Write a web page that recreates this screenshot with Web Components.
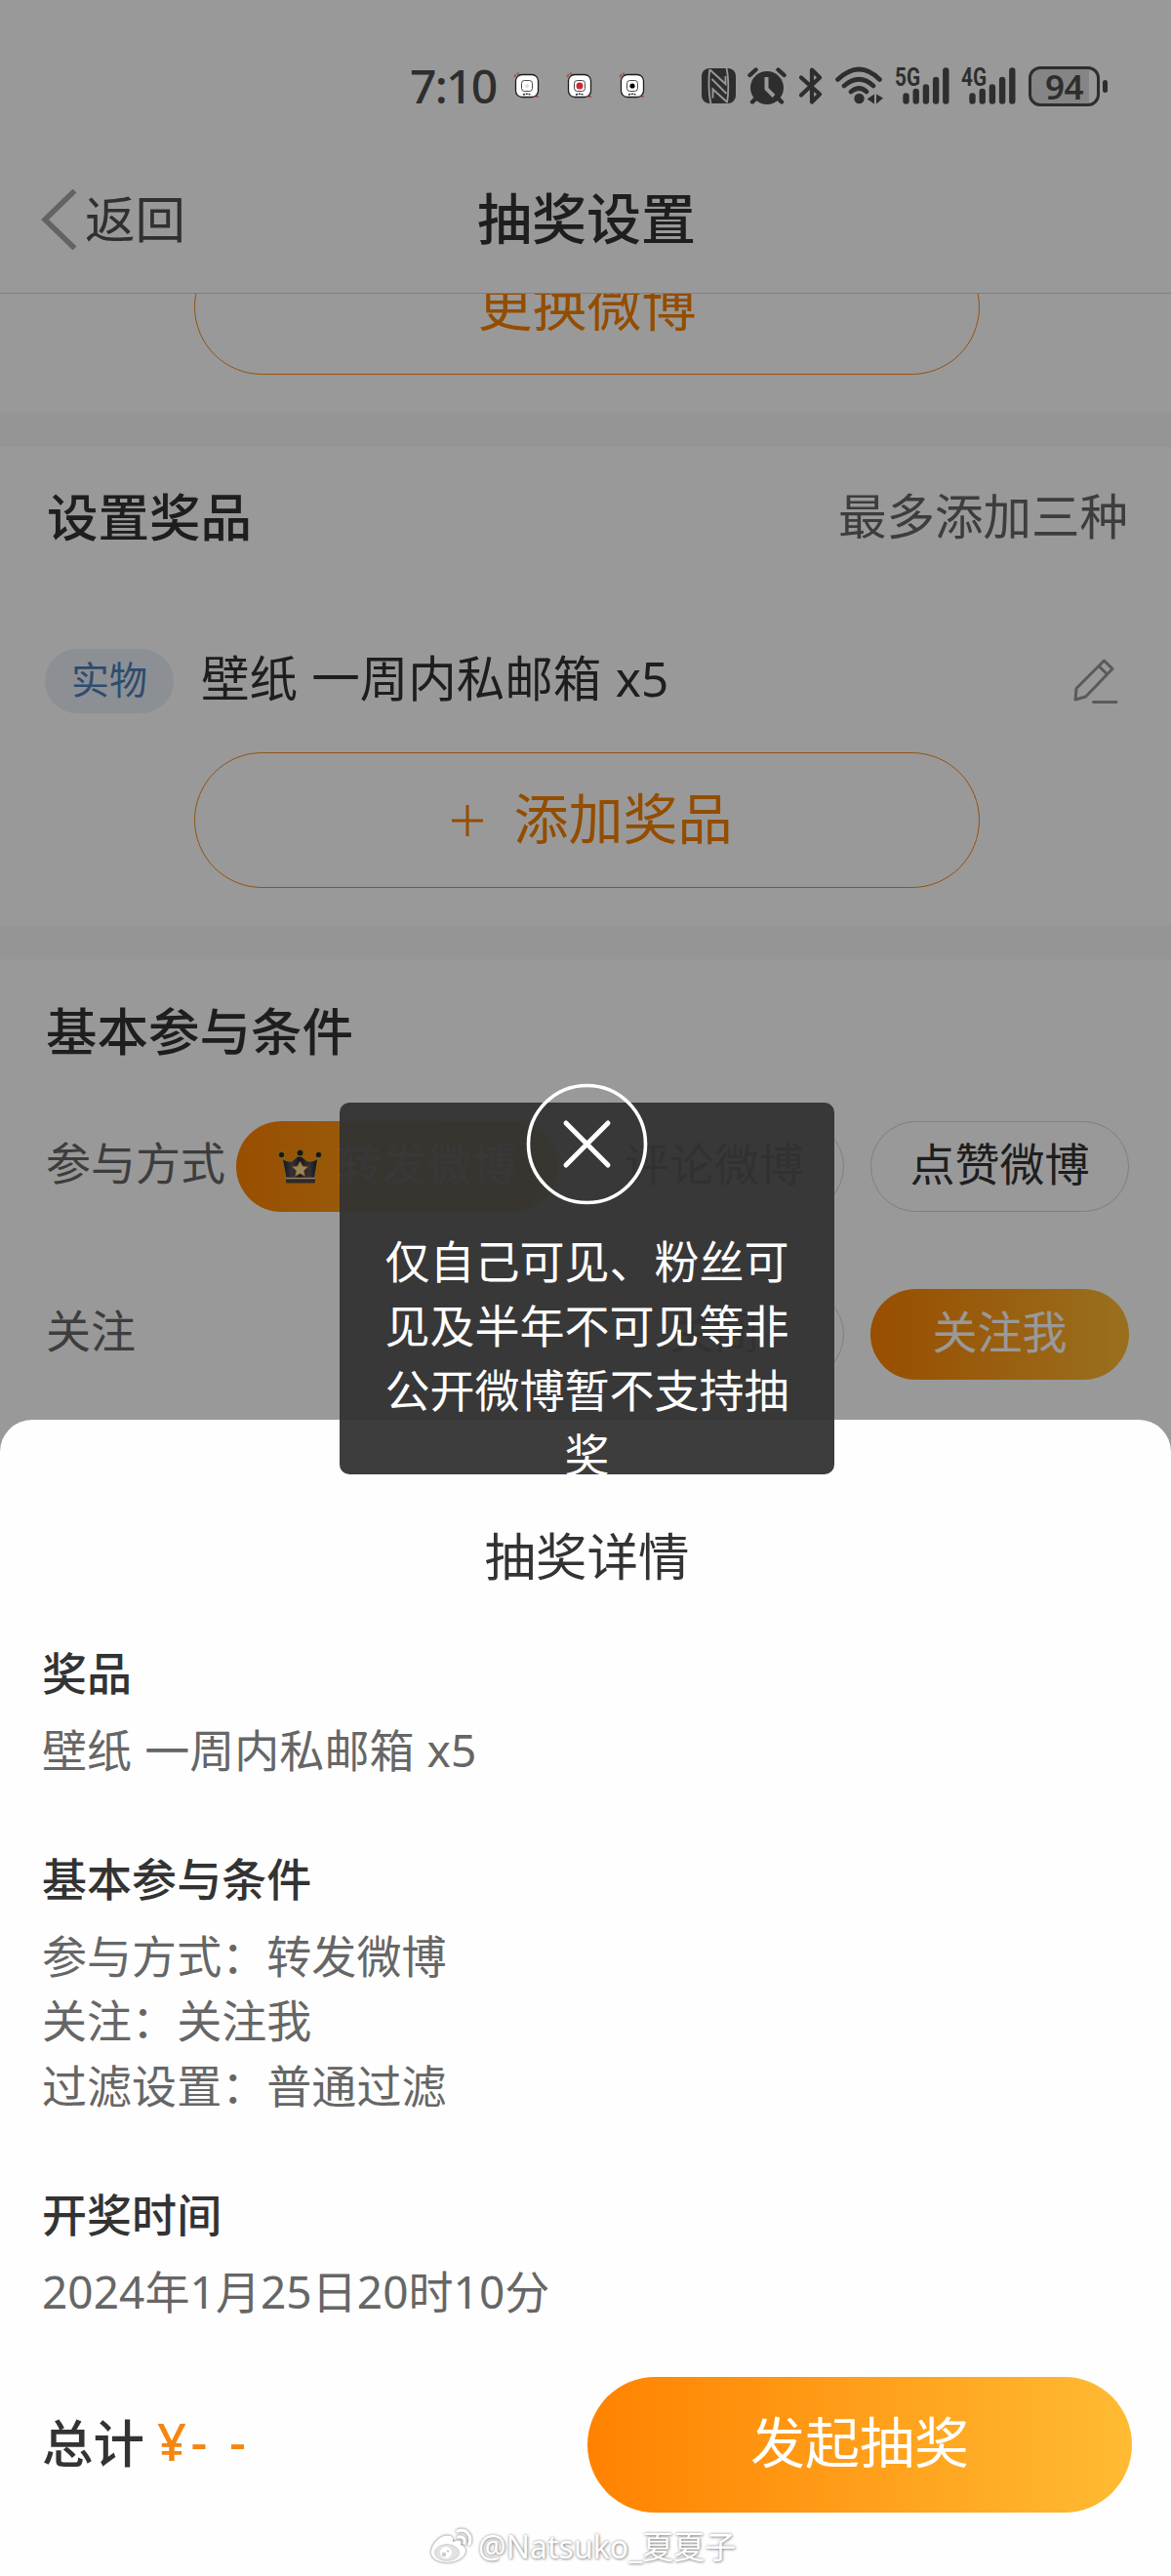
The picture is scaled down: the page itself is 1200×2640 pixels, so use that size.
<!DOCTYPE html>
<html lang="zh-CN">
<head>
<meta charset="utf-8">
<title>抽奖设置</title>
<style>
html,body{margin:0;padding:0}
body{width:1200px;height:2640px;overflow:hidden;background:#fff;color:#333;font-family:"Noto Sans","Noto Sans CJK SC",sans-serif}
</style>
</head>
<body>
<lottery-page></lottery-page>
<script>
const define = (name, css, html) => customElements.define(name, class extends HTMLElement {
  constructor() {
    super();
    const t = document.createElement('template');
    t.innerHTML = `<style>*{box-sizing:border-box}${css}</style>${typeof html === 'function' ? html(this) : html}`;
    this.attachShadow({ mode: 'open' }).appendChild(t.content.cloneNode(true));
  }
});

/* Status bar */
define('app-badge', ':host{display:block;width:26px;height:26px}svg{display:block;overflow:visible}', el => `
<svg width="26" height="26" viewBox="0 0 26 26">
<path d="M0 4l2-3M3 1l2-1M22 24l3 0" stroke="#a8584f" stroke-width="2"/>
<rect x="1.5" y="1.5" width="23" height="23" rx="6.5" fill="#fff" stroke="#1c1c1c" stroke-width="1.3"/>
<rect x="7.5" y="7.5" width="11" height="11" rx="3" fill="#fff" stroke="#333" stroke-width=".9"/>
<circle cx="13" cy="13" r="${el.dataset.r || 3}" fill="${el.dataset.fill || '#ddd'}"/>
<path d="M9 22q4-1.500 8 0" stroke="#222" fill="none" stroke-width="1.4" stroke-dasharray="2 .8"/></svg>`);

define('signal-bars', ':host{display:block;width:58px;height:40px}svg{display:block;overflow:visible}text{font:700 26px "Roboto","Noto Sans",sans-serif;fill:#2e2e2e}', el => `
<svg width="58" height="40" viewBox="0 0 58 40">
<text x="0" y="20" font-size="26" textLength="26" lengthAdjust="spacingAndGlyphs">${el.dataset.label}</text>
<path d="M11.500 30.500v5M21.700 26v9.500M31.900 21.500v14M42.100 14v21.500M52.300 4.500v31" stroke="#2e2e2e" stroke-width="6.400" stroke-linecap="round"/></svg>`);

define('battery-level', `:host{display:flex;align-items:center;gap:3px;height:42px}
.b{width:73px;height:41px;border:3px solid #2e2e2e;border-radius:12px;background:linear-gradient(90deg,#858585 88%,#999 88%);display:flex;align-items:center;justify-content:center;font-size:35px;line-height:35px;font-weight:600;color:#2e2e2e;letter-spacing:-.5px}
i{width:5px;height:13px;border-radius:3px;background:#2e2e2e}`, '<div class="b"><slot></slot></div><i></i>');

define('status-bar', `:host{display:block;height:149px;position:relative;z-index:3;color:#2e2e2e}
.r{display:flex;align-items:center;height:176px;padding-left:420px}
.t{font-size:48px;line-height:48px;font-weight:500;width:107px;letter-spacing:-1.700px;white-space:nowrap}
.apps{display:flex;gap:28px;width:192px}svg{display:block}
.nfc{margin-right:12px}.al{margin-right:13px}.bt{margin-right:13px}.wf{margin-right:12px}.s1{margin-right:10px}.s2{margin-right:11px}`, `
<div class="r"><div class="t">7:10</div>
<div class="apps"><app-badge data-r="2"></app-badge><app-badge data-fill="#cf2633" data-r="3.500"></app-badge><app-badge data-fill="#000" data-r="2.600"></app-badge></div>
<svg class="nfc" width="35" height="36" viewBox="0 0 35 36"><rect width="35" height="36" rx="8" fill="#2e2e2e"/><path d="M8.300 1C7 10 7 26 9.500 36M25.500 0c2.300 10 2.300 26 .5 35" stroke="#999" stroke-width="1.800" fill="none"/><path d="M8.500 1.500L24.500 16V8M26.500 35L11.500 21.500v9M10.500 11L25.500 26" stroke="#999" stroke-width="1.900" fill="none"/></svg>
<svg class="al" width="40" height="38" viewBox="0 0 40 38"><circle cx="20" cy="21" r="17" fill="#2e2e2e"/><path d="M2.500 8l6-5.500M37.500 8l-6-5.500M5 35.500l5-5M35 35.500l-5-5" stroke="#2e2e2e" stroke-width="4.400" stroke-linecap="round"/><path d="M19.500 10v12l7.500 7.500" stroke="#999" stroke-width="4" fill="none"/></svg>
<svg class="bt" width="24" height="38" viewBox="0 0 24 38"><path d="M2 10.500L21 27.500 13 35.500V2.500L21 10.500 2 28.500" stroke="#2e2e2e" stroke-width="4.200" fill="none" stroke-linejoin="round" stroke-linecap="round"/></svg>
<svg class="wf" width="49" height="40" viewBox="0 0 49 40"><path d="M2.500 13.500Q24.500-7.500 45.500 13.500M9 20q15.500-13.500 30 0M16 26q8.500-7 16 0" stroke="#2e2e2e" stroke-width="4.600" stroke-linecap="round" fill="none"/><circle cx="24.500" cy="33" r="5.200" fill="#2e2e2e"/><path d="M40 28.500v10l-7.500-5zM42 28.500v10l7-6z" fill="#2e2e2e"/></svg>
<signal-bars class="s1" data-label="5G"></signal-bars><signal-bars class="s2" data-label="4G"></signal-bars>
<battery-level>94</battery-level></div>`);

/* Navigation */
define('nav-header', `:host{display:grid;grid-template-columns:1fr auto 1fr;align-items:center;height:152px;padding:0 40px 0 42px;border-bottom:1px solid #d2d2d2;background:#fff}
.back{display:flex;align-items:center;gap:8px;font-size:51.500px;line-height:72px;color:#505050}svg{display:block}
.back span{padding-bottom:2px}
h1{margin:0;font-size:56px;line-height:80px;font-weight:500;color:#333;padding-bottom:3px}`, `
<div class="back"><svg width="37" height="62" viewBox="0 0 37 62"><path d="M34.500 1.500L4 31l30.500 29.500" fill="none" stroke="#a6a6a6" stroke-width="5.500"/></svg><span><slot name="back"></slot></span></div><h1><slot></slot></h1><span></span>`);

define('outline-button', `:host{display:flex;align-items:center;justify-content:center;width:805px;height:139px;margin:0 auto;border:1.500px solid #f58a1c;border-radius:70px;color:#f58100;font-size:56px;line-height:80px}
.l{padding-bottom:6px}:host([plus]){padding-left:10px}
svg{display:block;margin-right:32px}`, el => `${el.hasAttribute('plus') ? '<svg width="32" height="32" viewBox="0 0 32 32"><path d="M0 16h32M16 0v32" stroke="#f58100" stroke-width="3"/></svg>' : ''}<span class="l"><slot></slot></span>`);

define('section-title', `:host{display:flex;align-items:center;justify-content:space-between;font-size:52.500px;font-weight:500;color:#333;padding-bottom:6px}
.n{font-size:49.500px;font-weight:400;color:#666}`, '<span><slot></slot></span><span class="n"><slot name="note"></slot></span>');

define('prize-item', `:host{display:flex;align-items:center;height:66px;font-size:49.500px;line-height:66px;color:#333}
.tag{width:132px;height:66px;border-radius:33px;background:#e9f1f7;color:#507fb8;font-size:39px;text-align:center;line-height:62px;margin-right:28px}
.x{flex:1;padding-bottom:6px;word-spacing:1.500px}svg{display:block}`, `
<span class="tag"><slot name="tag"></slot></span><span class="x"><slot></slot></span>
<svg width="46" height="46" viewBox="0 0 46 46"><path d="M2 42l1-11.500L31.500 2l8.500 8.500L12.500 39zM26 7.500l8.500 8.500" fill="none" stroke="#979797" stroke-width="3" stroke-linejoin="round"/><path d="M20.500 44.500H44" stroke="#979797" stroke-width="3" stroke-linecap="round"/></svg>`);

define('crown-icon', ':host{display:block;width:48px;height:38px}svg{display:block}', `
<svg width="48" height="38" viewBox="0 0 48 38"><defs><linearGradient id="k"><stop stop-color="#24222a"/><stop offset=".28" stop-color="#5b5560"/><stop offset=".5" stop-color="#29252c"/><stop offset=".75" stop-color="#58525c"/><stop offset="1" stop-color="#1d1b20"/></linearGradient></defs>
<path d="M5 10q8 5 11 2l7-6 7 6q4 3 12-2l-4 24H9.500z" fill="url(#k)" stroke="#d8a51e" stroke-width="1.400"/>
<rect x="9" y="30" width="30" height="5.500" rx="1.500" fill="#4c4648"/><path d="M9 30.500h30" stroke="#f7d79c" stroke-width="1.500"/>
<g fill="#2b272c" stroke="#d8a51e" stroke-width="1.200"><circle cx="4.500" cy="6.500" r="3.300"/><circle cx="23.500" cy="4.500" r="3.600"/><circle cx="42.500" cy="6.500" r="3.300"/></g>
<path d="M23.500 13l2.500 5 5.500.8-4 4 1 5.700-5-2.800-5 2.800 1-5.700-4-4 5.500-.8z" fill="#ffe08f" stroke="#c98a2b" stroke-width=".8"/></svg>`);

define('option-chip', `:host{display:flex;align-items:center;justify-content:center;width:265px;height:93px;border:1px solid #d4d4d4;border-radius:47px;font-size:46px;line-height:60px;padding-bottom:8px;color:#333;white-space:nowrap}
:host([selected]){border:0;background:linear-gradient(90deg,#ff8200,#ffbb33);color:#fff}
:host([wide]){width:330px}crown-icon{margin:8px 14px 0 0}`, el => `${el.hasAttribute('wide') ? '<crown-icon></crown-icon>' : ''}<slot></slot>`);

define('option-row', `:host{display:flex;align-items:center;justify-content:space-between;height:93px}
.l{font-size:46px;line-height:60px;color:#666;padding-bottom:9px}.o{display:flex;gap:27.500px}`, el => `<span class="l">${el.dataset.label}</span><div class="o"><slot></slot></div>`);

define('page-mask', ':host{position:absolute;inset:0;background:rgba(0,0,0,.4);z-index:2}', '');

/* Toast */
define('toast-box', `:host{position:absolute;left:348px;top:1130px;width:507px;height:381px;z-index:5}
.b{width:507px;height:381px;border-radius:10px;background:rgba(51,51,51,.95);padding:129px 46px 0;overflow:hidden;color:#fff;font-size:46px;line-height:66px;text-align:center;word-break:break-all;line-break:anywhere}
svg{position:absolute;left:191px;top:-20px}`, `<div class="b"><slot></slot></div>
<svg width="125" height="125" viewBox="0 0 125 125"><circle cx="62.500" cy="62.500" r="60" fill="none" stroke="#fff" stroke-width="3.600"/><path d="M41 41l43 43M84 41L41 84" stroke="#fff" stroke-width="5" stroke-linecap="round"/></svg>`);

/* Bottom sheet */
define('detail-group', `:host{display:block;font-size:46px;line-height:66.500px;color:#666;word-spacing:1px;letter-spacing:.06px}
h3{margin:0 0 12px;font-size:46px;line-height:66.500px;font-weight:500;color:#333}`, el => `<h3>${el.dataset.title}</h3><slot></slot>`);

define('total-bar', `:host{display:flex;align-items:center;justify-content:space-between;height:139px;font-size:52.500px;color:#333}
.t{display:flex;align-items:center;font-weight:500;padding-bottom:9px}.p{color:#f5850f;margin-left:13px;letter-spacing:4.500px}
.go{width:558px;height:139px;border-radius:70px;background:linear-gradient(90deg,#ff8200,#ffbb33);color:#fff;font-size:56px;line-height:133px;text-align:center}`, '<div class="t"><span><slot name="label"></slot></span><span class="p"><slot name="price"></slot></span></div><div class="go"><slot></slot></div>');

define('detail-sheet', `:host{position:absolute;left:0;right:0;bottom:0;height:1185px;z-index:4;background:#fefefe;border-radius:33px 33px 0 0;padding:37px 40px 0 43px;display:flex;flex-direction:column}
.h{width:118px;height:16px;border-radius:8px;background:#e4e4e4;margin:0 auto}
h2{margin:50px 0 0;font-size:52.500px;line-height:74px;font-weight:400;text-align:center;color:#333}
.g{display:flex;flex-direction:column;gap:66px;margin-top:49px}.f{margin-top:55px}`, `<div class="h"></div><h2><slot name="title"></slot></h2><div class="g"><slot></slot></div><div class="f"><slot name="footer"></slot></div>`);

define('water-mark', `:host{position:absolute;left:440px;top:2588px;z-index:6;display:flex;align-items:center;gap:5px;height:44px;font-size:32px;line-height:44px;color:#fff;white-space:nowrap;text-shadow:0 0 3px rgba(0,0,0,.38),1px 1px 3px rgba(0,0,0,.3)}
svg{display:block;filter:drop-shadow(0 0 1.500px rgba(0,0,0,.6))}`, `
<svg width="45" height="40" viewBox="0 0 45 40"><path d="M15 9C8 11 1 20 2 27c1 6 9 9 16 9 11 0 19-6 19-12 0-4-3-5-5-6 1-3 0-6-8-3 1-4-1-8-9-6z" fill="#fff"/><ellipse cx="18" cy="26" rx="12.500" ry="8.500" fill="#e2e2e2" stroke="#c4c4c4" stroke-width=".7"/><circle cx="17" cy="26" r="6" fill="#fff"/><circle cx="15" cy="28" r="2.200" fill="#ccc"/><circle cx="19" cy="24.500" r="1.100" fill="#bbb"/><path d="M29 4c8-3 15 4 12 13M30 10c4-1 7 2 6 6" stroke="#fff" stroke-width="3.200" fill="none" stroke-linecap="round"/></svg><slot></slot>`);

define('lottery-page', `:host{display:block;position:relative;width:1200px;height:2640px;overflow:hidden;background:#fff}
.s1{height:122px;overflow:hidden}.s1 outline-button{margin:-56px 0 0 199px}
.band{height:35px;background:#f9f9f9}.band.b{height:34px}
.s2{height:491px;padding:0 44px 0 46px}.s2 section-title{height:144px;padding-left:2px}.s2 prize-item{margin:63px 10px 40px 0}.s2 outline-button{margin-left:153px}
.s3{padding:0 43px 0 47px}.s3 section-title{height:148px}.s3 option-row{margin:18px 0 79px}`, `
<status-bar></status-bar>
<nav-header><span slot="back">返回</span>抽奖设置</nav-header>
<div class="s1"><outline-button>更换微博</outline-button></div>
<div class="band"></div>
<div class="s2"><section-title>设置奖品<span slot="note">最多添加三种</span></section-title>
<prize-item><span slot="tag">实物</span>壁纸 一周内私邮箱 x5</prize-item>
<outline-button plus>添加奖品</outline-button></div>
<div class="band b"></div>
<div class="s3"><section-title>基本参与条件</section-title>
<option-row data-label="参与方式"><option-chip selected wide>转发微博</option-chip><option-chip>评论微博</option-chip><option-chip>点赞微博</option-chip></option-row>
<option-row data-label="关注"><option-chip>关闭</option-chip><option-chip selected>关注我</option-chip></option-row></div>
<page-mask></page-mask>
<detail-sheet><span slot="title">抽奖详情</span>
<detail-group data-title="奖品">壁纸 一周内私邮箱 x5</detail-group>
<detail-group data-title="基本参与条件"><div>参与方式：转发微博</div><div>关注：关注我</div><div>过滤设置：普通过滤</div></detail-group>
<detail-group data-title="开奖时间">2024年1月25日20时10分</detail-group>
<total-bar slot="footer"><span slot="label">总计</span><span slot="price">¥- -</span>发起抽奖</total-bar></detail-sheet>
<toast-box>仅自己可见、粉丝可见及半年不可见等非公开微博暂不支持抽奖</toast-box>
<water-mark>@Natsuko_夏夏子</water-mark>`);
</script>
</body>
</html>
